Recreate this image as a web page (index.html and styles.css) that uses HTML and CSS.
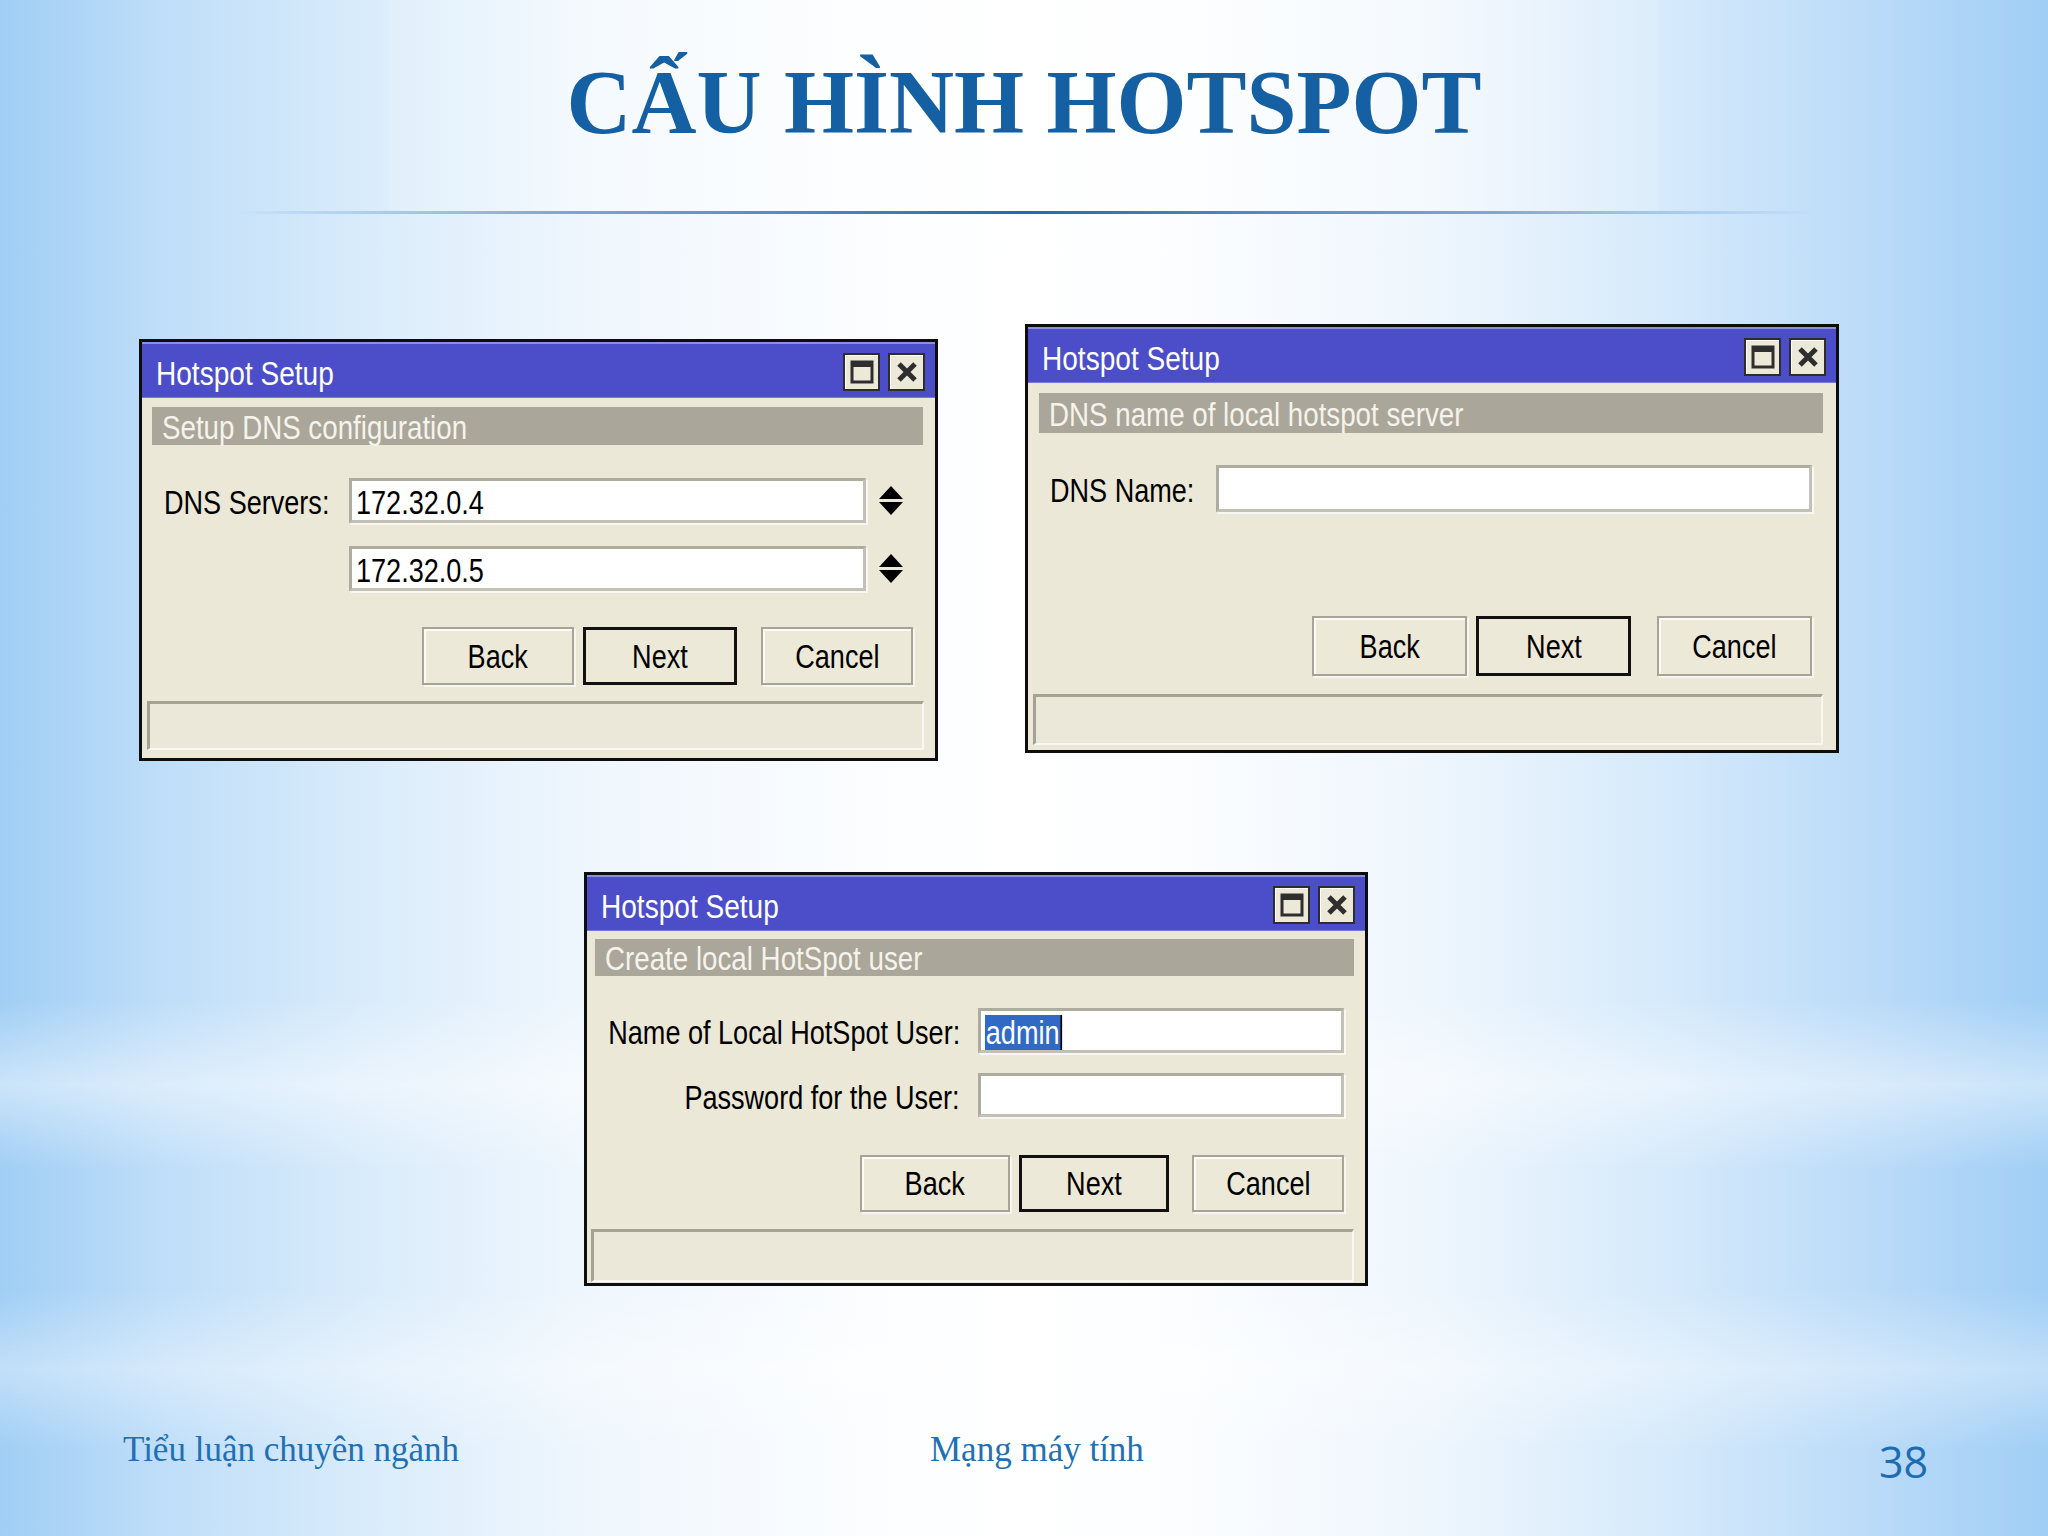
FILE: index.html
```html
<!DOCTYPE html>
<html lang="vi">
<head>
<meta charset="utf-8">
<title>Cấu hình Hotspot</title>
<link rel="stylesheet" href="styles.css">
</head>
<body>
<div class="slide">
  <div class="header"><h1>CẤU HÌNH HOTSPOT</h1></div>
  <div class="header-line"></div>

  <div class="row1">
    <div class="dialog d1">
      <div class="titlebar">
        <span class="title t">Hotspot Setup</span>
        <div class="wbtns">
          <span class="wbtn"><svg width="24" height="24" viewBox="0 0 24 24"><rect x="2" y="2" width="20" height="20" fill="none" stroke="#2e2e2e" stroke-width="3"/><rect x="1" y="1" width="22" height="6" fill="#2e2e2e"/></svg></span>
          <span class="wbtn"><svg width="22" height="22" viewBox="0 0 22 22"><path d="M3 3 L19 19 M19 3 L3 19" stroke="#2e2e2e" stroke-width="5"/></svg></span>
        </div>
      </div>
      <div class="section"><span class="t">Setup DNS configuration</span></div>
      <div class="form">
        <span class="lbl"><span class="t">DNS Servers:</span></span>
        <div class="field"><span class="t">172.32.0.4</span></div>
        <svg class="spin" width="26" height="31" viewBox="0 0 26 31"><polygon points="13,1 25,14 1,14" fill="#000"/><polygon points="1,17 25,17 13,30" fill="#000"/></svg>
        <span class="lbl"></span>
        <div class="field"><span class="t">172.32.0.5</span></div>
        <svg class="spin" width="26" height="31" viewBox="0 0 26 31"><polygon points="13,1 25,14 1,14" fill="#000"/><polygon points="1,17 25,17 13,30" fill="#000"/></svg>
      </div>
      <div class="buttons">
        <span class="btn"><span class="t c">Back</span></span>
        <span class="btn next"><span class="t c">Next</span></span>
        <span class="btn cancel"><span class="t c">Cancel</span></span>
      </div>
      <div class="status"></div>
    </div>

    <div class="dialog d2">
      <div class="titlebar">
        <span class="title t">Hotspot Setup</span>
        <div class="wbtns">
          <span class="wbtn"><svg width="24" height="24" viewBox="0 0 24 24"><rect x="2" y="2" width="20" height="20" fill="none" stroke="#2e2e2e" stroke-width="3"/><rect x="1" y="1" width="22" height="6" fill="#2e2e2e"/></svg></span>
          <span class="wbtn"><svg width="22" height="22" viewBox="0 0 22 22"><path d="M3 3 L19 19 M19 3 L3 19" stroke="#2e2e2e" stroke-width="5"/></svg></span>
        </div>
      </div>
      <div class="section"><span class="t">DNS name of local hotspot server</span></div>
      <div class="form">
        <span class="lbl"><span class="t">DNS Name:</span></span>
        <div class="field"></div>
      </div>
      <div class="buttons">
        <span class="btn"><span class="t c">Back</span></span>
        <span class="btn next"><span class="t c">Next</span></span>
        <span class="btn cancel"><span class="t c">Cancel</span></span>
      </div>
      <div class="status"></div>
    </div>
  </div>

  <div class="row2">
    <div class="dialog d3">
      <div class="titlebar">
        <span class="title t">Hotspot Setup</span>
        <div class="wbtns">
          <span class="wbtn"><svg width="24" height="24" viewBox="0 0 24 24"><rect x="2" y="2" width="20" height="20" fill="none" stroke="#2e2e2e" stroke-width="3"/><rect x="1" y="1" width="22" height="6" fill="#2e2e2e"/></svg></span>
          <span class="wbtn"><svg width="22" height="22" viewBox="0 0 22 22"><path d="M3 3 L19 19 M19 3 L3 19" stroke="#2e2e2e" stroke-width="5"/></svg></span>
        </div>
      </div>
      <div class="section"><span class="t">Create local HotSpot user</span></div>
      <div class="form">
        <span class="lbl"><span class="t r">Name of Local HotSpot User:</span></span>
        <div class="field"><span class="t"><span class="sel">admin</span></span></div>
        <span class="lbl"><span class="t r">Password for the User:</span></span>
        <div class="field"></div>
      </div>
      <div class="buttons">
        <span class="btn"><span class="t c">Back</span></span>
        <span class="btn next"><span class="t c">Next</span></span>
        <span class="btn cancel"><span class="t c">Cancel</span></span>
      </div>
      <div class="status"></div>
    </div>
  </div>

  <div class="footer">
    <span class="foot">Tiểu luận chuyên ngành</span>
    <span class="foot">Mạng máy tính</span>
    <span class="pagenum">38</span>
  </div>
</div>
</body>
</html>
```
FILE: styles.css
```css
* { box-sizing: border-box; margin: 0; padding: 0; }
html, body { width: 2048px; height: 1536px; overflow: hidden; }
body {
  font-family: "Liberation Sans", Arial, sans-serif;
  background:
    linear-gradient(to bottom, rgba(255,255,255,0) 0, rgba(255,255,255,0) 1000px, rgba(255,255,255,.45) 1085px, rgba(255,255,255,0) 1170px, rgba(255,255,255,0) 1290px, rgba(255,255,255,.35) 1370px, rgba(255,255,255,0) 1450px),
    linear-gradient(to right, #a0cef5 0%, #bfdef9 8%, #daecfb 18%, #eef6fd 28%, #fbfdff 42%, #ffffff 50%, #fbfdff 58%, #eef6fd 70%, #d4e9fb 82%, #b9daf8 92%, #a0cef5 100%);
}
.slide { width: 2048px; height: 1536px; display: flex; flex-direction: column; }

.header {
  width: 1270px; height: 213px; margin: 0 auto;
  background: linear-gradient(to right, rgba(255,255,255,.12), rgba(255,255,255,.35) 18%, rgba(255,255,255,.5) 50%, rgba(255,255,255,.35) 82%, rgba(255,255,255,.12));
}
.header h1 {
  font-family: "Liberation Serif", "Times New Roman", serif;
  font-weight: bold; font-size: 90px; line-height: 90px;
  color: #155fa3; text-align: center; padding-top: 58px;
}
.header-line {
  width: 1580px; height: 3px; margin: -2px auto 0;
  background: linear-gradient(to right, rgba(36,104,180,0), rgba(36,104,180,.55) 20%, #2468b4 50%, rgba(36,104,180,.55) 80%, rgba(36,104,180,0));
}

.row1 { display: flex; align-items: flex-start; gap: 87px; margin-top: 110px; padding-left: 139px; }
.row2 { display: flex; margin-top: 111px; padding-left: 584px; }

/* narrow UI text (Tahoma-like screenshot font, horizontally condensed) */
.t { display: inline-block; white-space: nowrap; line-height: 1; transform: scaleX(.82); transform-origin: left center; }
.t.r { transform-origin: right center; }
.t.c { transform-origin: center center; }

.dialog {
  border: 3px solid #0d0d0d; background: #ebe8d8;
  display: flex; flex-direction: column; color: #000; font-size: 33px;
}
.d1 { width: 799px; height: 422px; margin-top: 15px; }
.d2 { width: 814px; height: 429px; }
.d3 { width: 784px; height: 414px; }

.titlebar {
  height: 56px; flex: none;
  background: #4b4ec8;
  border-top: 2px solid #8c8edf; border-bottom: 1px solid #7779d2;
  display: flex; align-items: center; justify-content: space-between;
  padding: 0 10px 0 14px; color: #fff;
}
.title { margin-top: 6px; transform: scaleX(.85); }
.wbtns { display: flex; gap: 8px; margin-top: 2px; }
.wbtn {
  width: 37px; height: 38px; border: 2px solid #2d2d2d; background: #ece9d8;
  box-shadow: inset 1px 1px 0 #fff;
  display: flex; align-items: center; justify-content: center;
}

.section {
  flex: none; background: #aaa79a; color: #f5f3ec;
  padding-left: 10px;
  display: flex; align-items: center;
}
.section .t { transform: scaleX(.84); margin-top: 2px; }
.d1 .section { height: 38px; margin: 9px 12px 0 10px; }
.d2 .section { height: 40px; margin: 10px 13px 0 11px; }
.d3 .section { height: 37px; margin: 8px 11px 0 8px; }

.form { display: grid; align-items: center; }
.form .t { margin-top: 4px; }
.d1 .form { margin-top: 33px; padding-left: 22px; grid-template-columns: 185px 517px 38px; grid-auto-rows: 45px; row-gap: 23px; }
.d2 .form { margin-top: 32px; padding-left: 22px; grid-template-columns: 166px 596px; grid-auto-rows: 47px; }
.d3 .form { margin-top: 32px; grid-template-columns: 373px 366px; column-gap: 18px; grid-template-rows: 45px 44px; row-gap: 20px; }
.d3 .lbl { justify-self: end; }

.lbl { white-space: nowrap; line-height: 1; }
.field {
  height: 100%; background: #fff;
  border: 3px solid #c3c0b5; border-top-color: #aeab9f; border-left-color: #aeab9f;
  box-shadow: 2px 2px 0 #f8f7f2;
  padding-left: 4px; display: flex; align-items: center;
}
.spin { justify-self: end; }
.sel {
  display: inline-block;
  background: #316ac5; color: #fff; padding: 2px 1px;
  border-right: 2px solid #000; line-height: 31px;
}

.buttons { display: flex; justify-content: flex-end; flex: none; }
.d1 .buttons { margin-top: 36px; padding-right: 22px; }
.d2 .buttons { margin-top: 104px; padding-right: 24px; }
.d3 .buttons { margin-top: 38px; padding-right: 21px; }
.btn {
  display: flex; align-items: center; justify-content: center;
  background: #ece9d8;
  border: 2px solid #a7a497;
  box-shadow: inset 2px 2px 0 #fbfaf5, 2px 2px 0 #f7f6f0;
}
.btn.next { border: 3px solid #111; box-shadow: none; margin-left: 9px; }
.btn.cancel { margin-left: 24px; }
.d1 .btn { width: 152px; height: 58px; }
.d1 .btn.next { width: 154px; }
.d2 .btn { width: 155px; height: 60px; }
.d2 .btn.cancel { margin-left: 26px; }
.d3 .btn { width: 150px; height: 57px; }
.d3 .btn.cancel { width: 152px; margin-left: 23px; }

.status {
  flex: none; background: #ebe8d9;
  border-top: 3px solid #a5a293; border-left: 3px solid #a5a293;
  border-bottom: 2px solid #f8f7f1; border-right: 2px solid #f8f7f1;
}
.d1 .status { height: 49px; margin: 16px 11px 8px 5px; }
.d2 .status { height: 51px; margin: 18px 13px 5px 5px; }
.d3 .status { height: 53px; margin: 17px 11px 1px 4px; }

.footer {
  display: grid; grid-template-columns: 807px 949px auto; align-items: start;
  padding-left: 123px; margin-top: 144px;
  font-family: "Liberation Serif", "Times New Roman", serif;
  font-size: 35px; line-height: 40px; color: #2170b3;
}
.pagenum {
  font-family: "Open Sans", "Liberation Sans", sans-serif;
  font-size: 43px; line-height: 48px; margin-top: 8px; color: #1b6cb3;
}
```
